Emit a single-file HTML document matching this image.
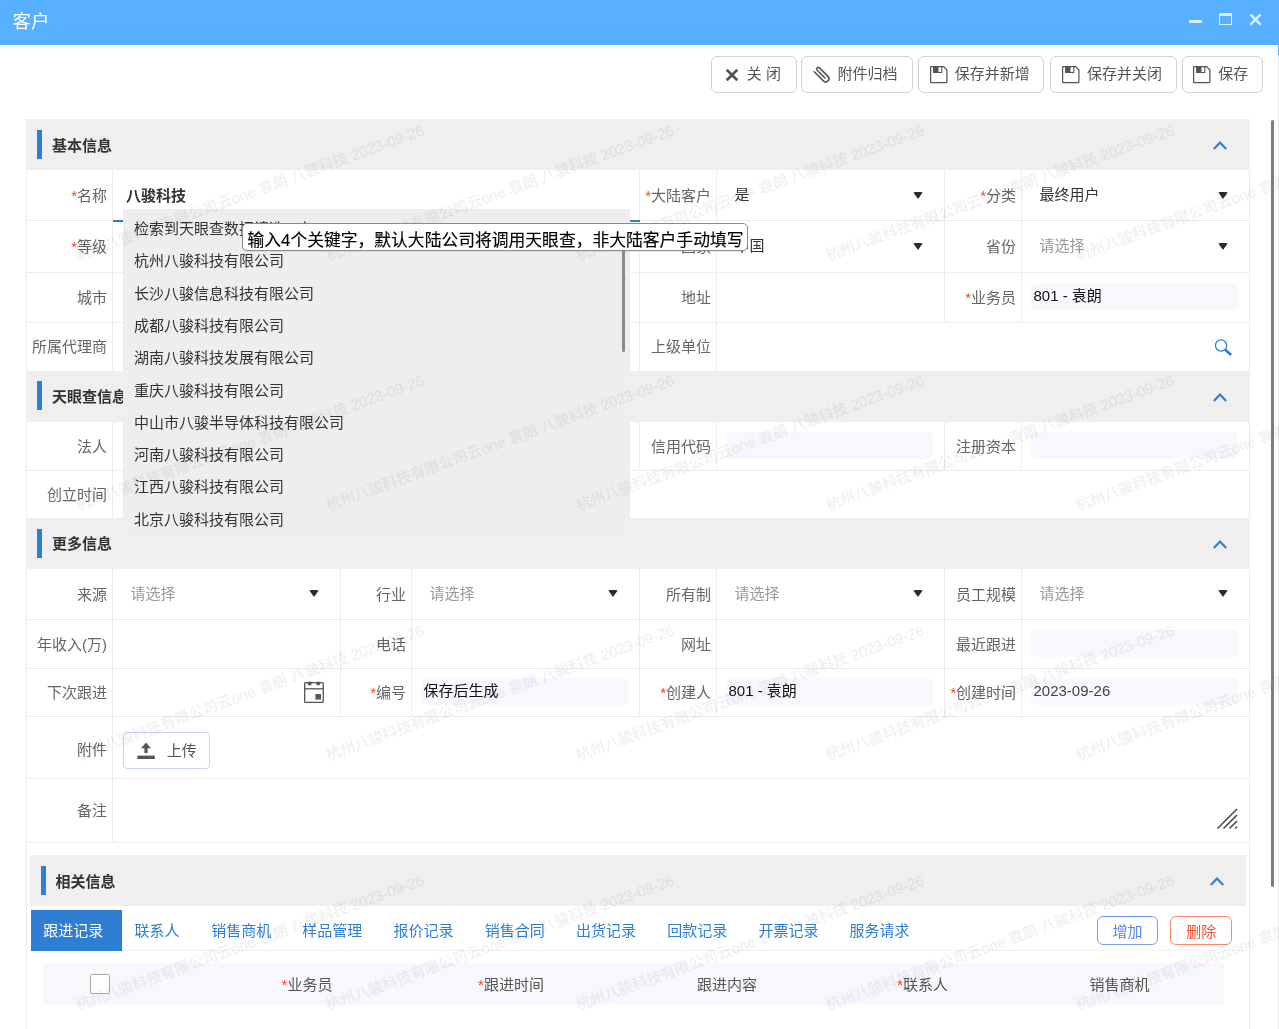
<!DOCTYPE html><html lang="zh-CN"><head><meta charset="utf-8"><title>客户</title><style>
*{box-sizing:border-box;margin:0;padding:0}
html,body{width:1279px;height:1029px;overflow:hidden;background:#fff}
body{position:relative;font-family:"Liberation Sans","Noto Sans CJK SC",sans-serif;font-size:15px;color:#666}
.a{position:absolute}
#root{position:absolute;left:0;top:0;width:1279px;height:1029px;will-change:transform}
#tb{left:0;top:0;width:1279px;height:45px;background:#56b0ff}
#tt{left:12.6px;top:0;height:44px;line-height:44px;font-size:18.4px;color:#fff}
.btn{top:56px;height:36.5px;border:1px solid #d2d2d2;border-radius:6px;background:#fff;color:#555;font-size:15px;line-height:34.5px;white-space:nowrap}
.btn span{position:absolute;top:0}
.btn svg{position:absolute}
.sh{background:#efefef}
.bar{width:5px;height:29px;background:#2e7fd3}
.st{font-weight:bold;color:#333;font-size:15px;line-height:20px;white-space:nowrap}
.hl{height:1px;background:#ededed}
.vl{width:1px;background:#ededed}
.lb{text-align:right;white-space:nowrap;line-height:20px;height:20px;color:#666}
.lb i{font-style:normal;color:#f5431f}
.v{white-space:nowrap;line-height:20px;height:20px;color:#333}
.ph{color:#999}
.ro{height:27px;border-radius:5px;background:#f7f8fd;color:#111;line-height:25.4px;padding-left:3px;white-space:nowrap}
.tri{width:0;height:0;border-left:5.5px solid transparent;border-right:5.5px solid transparent;border-top:7.5px solid #2b2b2b;border-radius:2px}
#dd{left:123px;top:209px;width:506.5px;height:329px;background:#eeeeee;overflow:hidden}
#dd div{position:absolute;left:11px;height:22px;line-height:22px;color:#333;white-space:nowrap}
#tip{left:242px;top:223px;height:28px;width:506px;border:1px solid #8b8b8b;border-radius:5px;background:#fff;color:#000;font-size:16.8px;-webkit-text-stroke:0.15px #000;line-height:26px;padding-top:3.5px;padding-left:4.5px;white-space:nowrap;box-shadow:0 1px 1px rgba(0,0,0,.08)}
.tab{top:910.5px;height:40.5px;line-height:40.5px;color:#2e7fd3;white-space:nowrap}
.wm{width:400px;height:24px;line-height:24px;text-align:center;font-size:15px;color:#000;-webkit-text-stroke:0.35px #000;opacity:0.058;transform:rotate(-20deg);white-space:nowrap;pointer-events:none}
.th{top:975.2px;height:20px;line-height:20px;white-space:nowrap;color:#555;text-align:center;width:120px}
.th i{font-style:normal;color:#f5431f}
</style></head><body><div id="root">
<div class="a" id="tb"></div><div class="a" id="tt">客户</div>
<div class="a" style="left:1189px;top:20px;width:13px;height:3px;background:#d9edff"></div>
<div class="a" style="left:1219px;top:13px;width:13px;height:12px;border:1.5px solid #d9edff;border-top-width:3.5px"></div>
<svg class="a" style="left:1249px;top:13px" width="13" height="13" viewBox="0 0 13 13"><path d="M1.4 1.4L11.6 11.6M11.6 1.4L1.4 11.6" stroke="#d9edff" stroke-width="2.5"/></svg>
<div class="a" style="left:1278px;top:45px;width:1px;height:10px;background:#56b0ff"></div>
<div class="a" style="left:1278px;top:55px;width:1px;height:974px;background:#e3ebf7"></div>
<div class="a btn" style="left:711.3px;width:85.4px"><svg style="left:12.6px;top:10.6px" width="14" height="14" viewBox="0 0 14 14"><path d="M1.7 1.7L12.3 12.3M12.3 1.7L1.7 12.3" stroke="#555" stroke-width="2.7"/></svg><span style="left:34.5px">关 闭</span></div>
<div class="a btn" style="left:801.3px;width:111.7px"><svg style="left:8.95px;top:7px" width="22" height="22" viewBox="0 0 22 22"><g transform="translate(11,11) rotate(-45) translate(0,-0.8)"><path d="M0 5V-6A1.6 1.6 0 0 1 3.2 -6V6A3.2 3.2 0 0 1 -3.2 6V-7" fill="none" stroke="#555" stroke-width="1.6" stroke-linecap="round"/></g></svg><span style="left:35.2px">附件归档</span></div>
<div class="a btn" style="left:918.2px;width:126px"><svg style="left:10.6px;top:8.9px" width="18" height="18" viewBox="0 0 18 18"><path d="M1.3 0.6H13.6L16.9 4V15.8a0.7 0.7 0 0 1-0.7 0.7H1.3a0.7 0.7 0 0 1-0.7-0.7V1.3a0.7 0.7 0 0 1 0.7-0.7Z" fill="none" stroke="#555" stroke-width="1.25"/><path d="M3.6 0.6V6.5H11.8V0.6" fill="none" stroke="#555" stroke-width="1.1"/><rect x="3.6" y="0.6" width="4.9" height="5.9" fill="#555"/></svg><span style="left:35.6px">保存并新增</span></div>
<div class="a btn" style="left:1050.3px;width:126.3px"><svg style="left:10.6px;top:8.9px" width="18" height="18" viewBox="0 0 18 18"><path d="M1.3 0.6H13.6L16.9 4V15.8a0.7 0.7 0 0 1-0.7 0.7H1.3a0.7 0.7 0 0 1-0.7-0.7V1.3a0.7 0.7 0 0 1 0.7-0.7Z" fill="none" stroke="#555" stroke-width="1.25"/><path d="M3.6 0.6V6.5H11.8V0.6" fill="none" stroke="#555" stroke-width="1.1"/><rect x="3.6" y="0.6" width="4.9" height="5.9" fill="#555"/></svg><span style="left:35.6px">保存并关闭</span></div>
<div class="a btn" style="left:1181.6px;width:81.4px"><svg style="left:10.6px;top:8.9px" width="18" height="18" viewBox="0 0 18 18"><path d="M1.3 0.6H13.6L16.9 4V15.8a0.7 0.7 0 0 1-0.7 0.7H1.3a0.7 0.7 0 0 1-0.7-0.7V1.3a0.7 0.7 0 0 1 0.7-0.7Z" fill="none" stroke="#555" stroke-width="1.25"/><path d="M3.6 0.6V6.5H11.8V0.6" fill="none" stroke="#555" stroke-width="1.1"/><rect x="3.6" y="0.6" width="4.9" height="5.9" fill="#555"/></svg><span style="left:35.6px">保存</span></div>
<div class="a vl" style="left:26px;top:119px;height:910px"></div>
<div class="a vl" style="left:1249px;top:119px;height:910px"></div>
<div class="a sh" style="left:26px;top:119px;width:1223.5px;height:51px"></div>
<div class="a bar" style="left:37px;top:129.7px"></div>
<div class="a st" style="left:52px;top:135.5px">基本信息</div>
<svg class="a" style="left:1212px;top:139.8px" width="16" height="11" viewBox="0 0 16 11"><path d="M1.8 9L8 2.6L14.2 9" fill="none" stroke="#2e7fd3" stroke-width="2.2"/></svg>
<div class="a hl" style="left:26px;top:220px;width:1223.5px"></div>
<div class="a hl" style="left:26px;top:272px;width:1223.5px"></div>
<div class="a hl" style="left:26px;top:322px;width:1223.5px"></div>
<div class="a vl" style="left:112px;top:170px;height:200.5px"></div>
<div class="a vl" style="left:639px;top:170px;height:200.5px"></div>
<div class="a vl" style="left:716px;top:170px;height:200.5px"></div>
<div class="a vl" style="left:944px;top:170px;height:152px"></div>
<div class="a vl" style="left:1021px;top:170px;height:152px"></div>
<div class="a vl" style="left:340px;top:220px;height:102px"></div>
<div class="a vl" style="left:411px;top:220px;height:102px"></div>
<div class="a lb" style="left:-14px;width:121px;top:186.1px"><i>*</i>名称</div>
<div class="a v " style="left:126px;top:186.1px"><b>八骏科技</b></div>
<div class="a" style="left:113px;top:220px;width:527px;height:2px;background:#2e7fd3"></div>
<div class="a lb" style="left:599px;width:112px;top:186.1px"><i>*</i>大陆客户</div>
<div class="a v " style="left:734.6px;top:185.2px">是</div>
<div class="a tri" style="left:913px;top:191.5px"></div>
<div class="a lb" style="left:904px;width:112px;top:186.1px"><i>*</i>分类</div>
<div class="a v " style="left:1039.6px;top:185.2px">最终用户</div>
<div class="a tri" style="left:1218px;top:191.5px"></div>
<div class="a lb" style="left:-14px;width:121px;top:237.1px"><i>*</i>等级</div>
<div class="a lb" style="left:599px;width:112px;top:237.1px">国家</div>
<div class="a v " style="left:734.6px;top:236.2px">中国</div>
<div class="a tri" style="left:913px;top:242.5px"></div>
<div class="a lb" style="left:904px;width:112px;top:237.1px">省份</div>
<div class="a v ph" style="left:1039.6px;top:236.2px">请选择</div>
<div class="a tri" style="left:1218px;top:242.5px"></div>
<div class="a lb" style="left:-14px;width:121px;top:288.1px">城市</div>
<div class="a lb" style="left:599px;width:112px;top:288.1px">地址</div>
<div class="a lb" style="left:904px;width:112px;top:288.1px"><i>*</i>业务员</div>
<div class="a ro" style="left:1030.5px;top:283.3px;width:207.5px">801 - 袁朗</div>
<div class="a lb" style="left:-14px;width:121px;top:337.35px">所属代理商</div>
<div class="a lb" style="left:599px;width:112px;top:337.35px">上级单位</div>
<svg class="a" style="left:1213px;top:338px" width="22" height="22" viewBox="0 0 22 22"><circle cx="8.07" cy="7.5" r="5.6" fill="none" stroke="#2e7fd3" stroke-width="1.3"/><path d="M12.2 11.8L18.1 16.9" stroke="#2e7fd3" stroke-width="2.6"/></svg>
<div class="a sh" style="left:26px;top:370.5px;width:1223.5px;height:51.5px"></div>
<div class="a bar" style="left:37px;top:381.2px"></div>
<div class="a st" style="left:52px;top:387.25px">天眼查信息</div>
<svg class="a" style="left:1212px;top:391.55px" width="16" height="11" viewBox="0 0 16 11"><path d="M1.8 9L8 2.6L14.2 9" fill="none" stroke="#2e7fd3" stroke-width="2.2"/></svg>
<div class="a hl" style="left:26px;top:470px;width:1223.5px"></div>
<div class="a vl" style="left:112px;top:422px;height:96px"></div>
<div class="a vl" style="left:639px;top:422px;height:48px"></div>
<div class="a vl" style="left:716px;top:422px;height:48px"></div>
<div class="a vl" style="left:944px;top:422px;height:48px"></div>
<div class="a vl" style="left:1021px;top:422px;height:48px"></div>
<div class="a lb" style="left:-14px;width:121px;top:437.1px">法人</div>
<div class="a lb" style="left:599px;width:112px;top:437.1px">信用代码</div>
<div class="a ro" style="left:725.5px;top:432.3px;width:207.5px"></div>
<div class="a lb" style="left:904px;width:112px;top:437.1px">注册资本</div>
<div class="a ro" style="left:1030.5px;top:432.3px;width:207.5px"></div>
<div class="a lb" style="left:-14px;width:121px;top:485.1px">创立时间</div>
<div class="a sh" style="left:26px;top:518px;width:1223.5px;height:50.5px"></div>
<div class="a bar" style="left:37px;top:528.7px"></div>
<div class="a st" style="left:52px;top:534.25px">更多信息</div>
<svg class="a" style="left:1212px;top:538.55px" width="16" height="11" viewBox="0 0 16 11"><path d="M1.8 9L8 2.6L14.2 9" fill="none" stroke="#2e7fd3" stroke-width="2.2"/></svg>
<div class="a hl" style="left:26px;top:619px;width:1223.5px"></div>
<div class="a hl" style="left:26px;top:668px;width:1223.5px"></div>
<div class="a hl" style="left:26px;top:716px;width:1223.5px"></div>
<div class="a hl" style="left:26px;top:778px;width:1223.5px"></div>
<div class="a hl" style="left:26px;top:842px;width:1223.5px"></div>
<div class="a vl" style="left:112px;top:568.5px;height:273.5px"></div>
<div class="a vl" style="left:340px;top:568.5px;height:147.5px"></div>
<div class="a vl" style="left:411px;top:568.5px;height:147.5px"></div>
<div class="a vl" style="left:639px;top:568.5px;height:147.5px"></div>
<div class="a vl" style="left:716px;top:568.5px;height:147.5px"></div>
<div class="a vl" style="left:944px;top:568.5px;height:147.5px"></div>
<div class="a vl" style="left:1021px;top:568.5px;height:147.5px"></div>
<div class="a lb" style="left:-14px;width:121px;top:584.85px">来源</div>
<div class="a v ph" style="left:130.6px;top:583.95px">请选择</div>
<div class="a tri" style="left:309px;top:590.25px"></div>
<div class="a lb" style="left:300px;width:106px;top:584.85px">行业</div>
<div class="a v ph" style="left:429.6px;top:583.95px">请选择</div>
<div class="a tri" style="left:608px;top:590.25px"></div>
<div class="a lb" style="left:599px;width:112px;top:584.85px">所有制</div>
<div class="a v ph" style="left:734.6px;top:583.95px">请选择</div>
<div class="a tri" style="left:913px;top:590.25px"></div>
<div class="a lb" style="left:904px;width:112px;top:584.85px">员工规模</div>
<div class="a v ph" style="left:1039.6px;top:583.95px">请选择</div>
<div class="a tri" style="left:1218px;top:590.25px"></div>
<div class="a lb" style="left:-14px;width:121px;top:634.6px">年收入(万)</div>
<div class="a lb" style="left:300px;width:106px;top:634.6px">电话</div>
<div class="a lb" style="left:599px;width:112px;top:634.6px">网址</div>
<div class="a lb" style="left:904px;width:112px;top:634.6px">最近跟进</div>
<div class="a ro" style="left:1030.5px;top:629.8px;width:207.5px"></div>
<div class="a lb" style="left:-14px;width:121px;top:683.1px">下次跟进</div>
<svg class="a" style="left:303px;top:680px" width="22" height="24" viewBox="0 0 22 24"><rect x="1.65" y="2.6" width="18.6" height="19.8" rx="0.9" fill="none" stroke="#555" stroke-width="1.3"/><path d="M1.6 8.8H20.3" stroke="#555" stroke-width="1.3"/><circle cx="6.7" cy="3.4" r="2" fill="#555"/><circle cx="15.2" cy="3.4" r="2" fill="#555"/><rect x="12.4" y="14" width="5.6" height="5.6" fill="#555"/></svg>
<div class="a lb" style="left:300px;width:106px;top:683.1px"><i>*</i>编号</div>
<div class="a ro" style="left:420.5px;top:678.3px;width:207.5px">保存后生成</div>
<div class="a lb" style="left:599px;width:112px;top:683.1px"><i>*</i>创建人</div>
<div class="a ro" style="left:725.5px;top:678.3px;width:207.5px">801 - 袁朗</div>
<div class="a lb" style="left:904px;width:112px;top:683.1px"><i>*</i>创建时间</div>
<div class="a ro" style="left:1030.5px;top:678.3px;width:207.5px;color:#444">2023-09-26</div>
<div class="a lb" style="left:-14px;width:121px;top:740.3000000000001px">附件</div>
<div class="a" style="left:123px;top:732px;width:87px;height:36.5px;border:1px solid #c9d6ea;border-radius:4px;background:#fff"></div>
<svg class="a" style="left:136px;top:741px" width="20" height="19" viewBox="0 0 20 19"><path d="M10 1.4L15 7.2H11.6V12H8.4V7.2H5Z" fill="#555"/><rect x="1.4" y="14.6" width="17.4" height="3.4" fill="#555"/></svg>
<div class="a v" style="left:166.7px;top:741.2px;color:#555">上传</div>
<div class="a lb" style="left:-14px;width:121px;top:801.1px">备注</div>
<svg class="a" style="left:1216px;top:808px" width="22" height="22" viewBox="0 0 22 22"><path d="M1.5 20.5L21 1M7.5 20.5L21 7M13.5 20.5L21 13M19.3 20.5L21 18.8" stroke="#444" stroke-width="1.5"/></svg>
<div class="a sh" style="left:29.5px;top:855px;width:1216.5px;height:51px"></div>
<div class="a bar" style="left:40.5px;top:865.7px"></div>
<div class="a st" style="left:55.5px;top:871.5px">相关信息</div>
<svg class="a" style="left:1209px;top:875.8px" width="16" height="11" viewBox="0 0 16 11"><path d="M1.8 9L8 2.6L14.2 9" fill="none" stroke="#2e7fd3" stroke-width="2.2"/></svg>
<div class="a" style="left:30px;top:950px;width:1216px;height:1px;background:#f1f1f1"></div>
<div class="a" style="left:30.7px;top:910px;width:91px;height:40.5px;background:#2e7fd3"></div>
<div class="a tab" style="left:43.3px;color:#fff">跟进记录</div>
<div class="a tab" style="left:134.5px">联系人</div>
<div class="a tab" style="left:211.2px">销售商机</div>
<div class="a tab" style="left:302.2px">样品管理</div>
<div class="a tab" style="left:393.5px">报价记录</div>
<div class="a tab" style="left:484.7px">销售合同</div>
<div class="a tab" style="left:576px">出货记录</div>
<div class="a tab" style="left:667.2px">回款记录</div>
<div class="a tab" style="left:758.4px">开票记录</div>
<div class="a tab" style="left:849.6px">服务请求</div>
<div class="a" style="left:1096.7px;top:916.2px;width:61.5px;height:28.8px;border:1px solid #7a9bf8;border-radius:6px;color:#5b82f0;text-align:center;line-height:29px">增加</div>
<div class="a" style="left:1170.3px;top:916.2px;width:62px;height:28.8px;border:1px solid #ff8468;border-radius:6px;color:#f5502f;text-align:center;line-height:29px">删除</div>
<div class="a" style="left:43.3px;top:963px;width:1180.4px;height:41.7px;background:#f7f8fc"></div>
<div class="a" style="left:90px;top:973.8px;width:20px;height:20px;border:1px solid #a6a6a6;border-radius:1.5px;background:#fff"></div>
<div class="a th" style="left:247px"><i>*</i>业务员</div>
<div class="a th" style="left:451px"><i>*</i>跟进时间</div>
<div class="a th" style="left:667px">跟进内容</div>
<div class="a th" style="left:862.5px"><i>*</i>联系人</div>
<div class="a th" style="left:1059.4px">销售商机</div>
<div class="a" id="dd"><div style="top:9.10px">检索到天眼查数据请选一条</div><div style="top:41.39px">杭州八骏科技有限公司</div><div style="top:73.68px">长沙八骏信息科技有限公司</div><div style="top:105.97px">成都八骏科技有限公司</div><div style="top:138.26px">湖南八骏科技发展有限公司</div><div style="top:170.55px">重庆八骏科技有限公司</div><div style="top:202.84px">中山市八骏半导体科技有限公司</div><div style="top:235.13px">河南八骏科技有限公司</div><div style="top:267.42px">江西八骏科技有限公司</div><div style="top:299.71px">北京八骏科技有限公司</div></div>
<div class="a" style="left:622.3px;top:228px;width:3.2px;height:124px;border-radius:2px;background:#8a8a8a"></div>
<div class="a wm" style="left:50px;top:181px">杭州八骏科技有限公司云one 袁朗 八骏科技 2023-09-26</div>
<div class="a wm" style="left:300px;top:181px">杭州八骏科技有限公司云one 袁朗 八骏科技 2023-09-26</div>
<div class="a wm" style="left:550px;top:181px">杭州八骏科技有限公司云one 袁朗 八骏科技 2023-09-26</div>
<div class="a wm" style="left:800px;top:181px">杭州八骏科技有限公司云one 袁朗 八骏科技 2023-09-26</div>
<div class="a wm" style="left:1050px;top:181px">杭州八骏科技有限公司云one 袁朗 八骏科技 2023-09-26</div>
<div class="a wm" style="left:50px;top:431px">杭州八骏科技有限公司云one 袁朗 八骏科技 2023-09-26</div>
<div class="a wm" style="left:300px;top:431px">杭州八骏科技有限公司云one 袁朗 八骏科技 2023-09-26</div>
<div class="a wm" style="left:550px;top:431px">杭州八骏科技有限公司云one 袁朗 八骏科技 2023-09-26</div>
<div class="a wm" style="left:800px;top:431px">杭州八骏科技有限公司云one 袁朗 八骏科技 2023-09-26</div>
<div class="a wm" style="left:1050px;top:431px">杭州八骏科技有限公司云one 袁朗 八骏科技 2023-09-26</div>
<div class="a wm" style="left:50px;top:681px">杭州八骏科技有限公司云one 袁朗 八骏科技 2023-09-26</div>
<div class="a wm" style="left:300px;top:681px">杭州八骏科技有限公司云one 袁朗 八骏科技 2023-09-26</div>
<div class="a wm" style="left:550px;top:681px">杭州八骏科技有限公司云one 袁朗 八骏科技 2023-09-26</div>
<div class="a wm" style="left:800px;top:681px">杭州八骏科技有限公司云one 袁朗 八骏科技 2023-09-26</div>
<div class="a wm" style="left:1050px;top:681px">杭州八骏科技有限公司云one 袁朗 八骏科技 2023-09-26</div>
<div class="a wm" style="left:50px;top:931px">杭州八骏科技有限公司云one 袁朗 八骏科技 2023-09-26</div>
<div class="a wm" style="left:300px;top:931px">杭州八骏科技有限公司云one 袁朗 八骏科技 2023-09-26</div>
<div class="a wm" style="left:550px;top:931px">杭州八骏科技有限公司云one 袁朗 八骏科技 2023-09-26</div>
<div class="a wm" style="left:800px;top:931px">杭州八骏科技有限公司云one 袁朗 八骏科技 2023-09-26</div>
<div class="a wm" style="left:1050px;top:931px">杭州八骏科技有限公司云one 袁朗 八骏科技 2023-09-26</div>
<div class="a" id="tip">输入4个关键字，默认大陆公司将调用天眼查，非大陆客户手动填写</div>
<div class="a" style="left:1271.2px;top:120px;width:3px;height:767px;border-radius:2px;background:#7d7d7d"></div>
</div></body></html>
